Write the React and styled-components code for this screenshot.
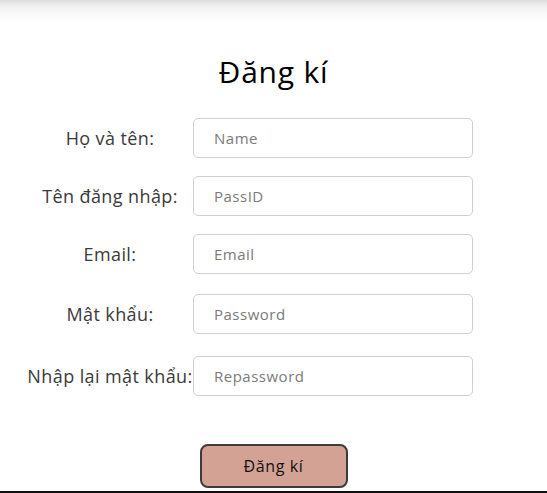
import React from "react";
import styled, { createGlobalStyle } from "styled-components";

const Global = createGlobalStyle`
  html, body { margin: 0; padding: 0; background: #fff; }
  body { font-family: "Open Sans", "Noto Sans", sans-serif; }
  * { box-sizing: border-box; }
`;

const Page = styled.div`
  width: 547px;
  height: 493px;
  display: flex;
  flex-direction: column;
  overflow: hidden;
`;

const Shade = styled.div`
  height: 22px;
  flex: none;
  background: linear-gradient(to bottom, #dcdcdc 0px, #f0f0f0 6px, #fafafa 14px, #ffffff 22px);
`;

const Title = styled.h1`
  margin: 30px 0 0;
  text-align: center;
  font-size: 30px;
  font-weight: 500;
  letter-spacing: 0.8px;
  line-height: 40px;
  color: #000;
`;

const Form = styled.form`
  flex: 1;
  display: flex;
  flex-direction: column;
`;

const Fields = styled.div`
  display: grid;
  grid-template-columns: 160px 280px;
  column-gap: 3px;
  padding-left: 30px;
  margin-top: 26px;
`;

const Label = styled.label`
  display: flex;
  align-items: center;
  justify-content: center;
  text-align: center;
  font-size: 18px;
  letter-spacing: 0.4px;
  color: #3a3a3a;
  white-space: nowrap;
  margin-top: ${(p) => p.$gap}px;
`;

const Input = styled.input`
  height: 40px;
  width: 280px;
  border: 1px solid #cfcfcf;
  border-radius: 5px;
  padding: 0 20px;
  font-family: inherit;
  font-size: 15px;
  letter-spacing: 0.5px;
  color: #333;
  outline: none;
  margin-top: ${(p) => p.$gap}px;
  &::placeholder { color: #7a7a7a; }
`;

const Button = styled.button`
  align-self: center;
  margin-top: 48px;
  width: 148px;
  height: 44px;
  background: #d4a294;
  border: 2px solid #3c3c3c;
  border-radius: 8px;
  font-family: inherit;
  font-size: 16px;
  letter-spacing: 0.6px;
  color: #111;
`;

const Footer = styled.div`
  margin-top: auto;
  height: 2px;
  flex: none;
  background: #111;
`;

const fields = [
  { label: "Họ và tên:", ph: "Name", gap: 0 },
  { label: "Tên đăng nhập:", ph: "PassID", gap: 18 },
  { label: "Email:", ph: "Email", gap: 18 },
  { label: "Mật khẩu:", ph: "Password", gap: 20 },
  { label: "Nhập lại mật khẩu:", ph: "Repassword", gap: 22 },
];

export default function App() {
  return (
    <Page>
      <Global />
      <Shade />
      <Title>Đăng kí</Title>
      <Form onSubmit={(e) => e.preventDefault()}>
        <Fields>
          {fields.map((f) => (
            <React.Fragment key={f.ph}>
              <Label $gap={f.gap}>{f.label}</Label>
              <Input $gap={f.gap} placeholder={f.ph} />
            </React.Fragment>
          ))}
        </Fields>
        <Button type="submit">Đăng kí</Button>
      </Form>
      <Footer />
    </Page>
  );
}
